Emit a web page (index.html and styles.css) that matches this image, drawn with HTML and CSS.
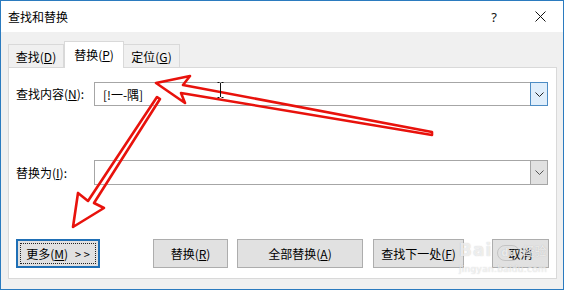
FILE: index.html
```html
<!DOCTYPE html>
<html lang="zh-CN">
<head>
<meta charset="utf-8">
<title>查找和替换</title>
<link rel="stylesheet" href="styles.css">
</head>
<body>
<div class="window">
  <div class="titlebar">
    <div class="title">查找和替换</div>
    <div class="tb-btn help">?</div>
    <div class="tb-btn close">
      <svg width="11" height="11" viewBox="0 0 11 11"><path d="M0.5 0.5 L10.5 10.5 M10.5 0.5 L0.5 10.5" stroke="#111" stroke-width="1" fill="none"/></svg>
    </div>
  </div>
  <div class="body">
    <div class="tabs">
      <div class="tab">查找(<u>D</u>)</div>
      <div class="tab active">替换(<u>P</u>)</div>
      <div class="tab narrow">定位(<u>G</u>)</div>
    </div>
    <div class="panel">
      <div class="row">
        <div class="label">查找内容(<u>N</u>):</div>
        <div class="combo">
          <div class="combo-text">[!一-隅]</div>
          <div class="combo-btn focus"><svg width="9" height="5" viewBox="0 0 9 5"><path d="M0.5 0.5 L4.5 4.5 L8.5 0.5" stroke="#222" stroke-width="1" fill="none"/></svg></div>
        </div>
      </div>
      <div class="row row2">
        <div class="label">替换为(<u>I</u>):</div>
        <div class="combo">
          <div class="combo-text"></div>
          <div class="combo-btn"><svg width="9" height="5" viewBox="0 0 9 5"><path d="M0.5 0.5 L4.5 4.5 L8.5 0.5" stroke="#555" stroke-width="1" fill="none"/></svg></div>
        </div>
      </div>
      <div class="buttons">
        <div class="btn more"><span class="focusrect">更多(<u>M</u>)<span class="gt">&gt; &gt;</span></span></div>
        <div class="btn b-replace">替换(<u>R</u>)</div>
        <div class="btn b-all">全部替换(<u>A</u>)</div>
        <div class="btn b-next">查找下一处(<u>F</u>)</div>
        <div class="btn b-cancel">取消</div>
      </div>
    </div>
  </div>
  <div class="watermark">
    <span class="wm-bai">Bai</span><span class="wm-du">du</span><span class="wm-jy">经验</span>
    <div class="wm-url">jingyan.baidu.com</div>
  </div>
  <svg class="overlay" width="565" height="291" viewBox="0 0 565 291">
    <g stroke="#e8120c" stroke-width="2.6" fill="none" stroke-linejoin="round" stroke-linecap="round">
      <path d="M183 85 L432 132 L432 135 L181 93 L185 103 L156 83 L190 76 Z"/>
      <path d="M157 97 L88 201 L78 193 L73 227 L104 208 L94 203 L160 99 Z"/>
    </g>
    <g stroke="#111" stroke-width="1" fill="none">
      <path d="M220.5 83 L220.5 97 M217.5 82.5 L219.5 82.5 M221.5 82.5 L223.5 82.5 M217.5 97.5 L219.5 97.5 M221.5 97.5 L223.5 97.5"/>
    </g>
  </svg>
</div>
</body>
</html>
```
FILE: styles.css
```css
* { box-sizing: border-box; }
html, body { margin: 0; padding: 0; background: #fff; }
body {
  font-family: "Noto Sans CJK SC", "Microsoft YaHei", sans-serif;
  font-size: 12px;
  color: #000;
  line-height: 14px;
}
u { text-decoration: underline; text-underline-offset: 1px; }

.window {
  position: relative;
  width: 564px;
  height: 290px;
  border: 1px solid #2b7bbf;
  display: flex;
  flex-direction: column;
  background: #f0f0f0;
}

.titlebar {
  height: 31px;
  background: #fff;
  display: flex;
  align-items: center;
  padding-left: 7px;
  flex: none;
}
.title { flex: 1; padding-top: 1px; }
.tb-btn {
  width: 46px;
  height: 31px;
  display: flex;
  align-items: center;
  justify-content: center;
}
.help { font-family: "Segoe UI", "Noto Sans", sans-serif; font-size: 13px; color: #111; }

.body {
  flex: 1;
  display: flex;
  flex-direction: column;
  padding: 8px 6px 10px 7px;
}

.tabs {
  display: flex;
  align-items: flex-end;
  height: 27px;
  flex: none;
  position: relative;
  z-index: 1;
}
.tab {
  width: 56px;
  height: 23px;
  border: 1px solid #d9d9d9;
  border-bottom: none;
  background: #f0f0f0;
  display: flex;
  align-items: center;
  justify-content: center;
  padding-top: 1px;
  color: #000;
}
.tab.active {
  width: 60px;
  height: 27px;
  background: #fff;
  margin-bottom: -1px;
  padding-bottom: 1px;
}
.tab.narrow { border-left: none; }

.panel {
  flex: 1;
  background: #fff;
  border: 1px solid #d9d9d9;
  padding: 14px 8px 0 7px;
  display: flex;
  flex-direction: column;
}

.row {
  display: flex;
  align-items: center;
  height: 24px;
}
.row2 { margin-top: 54px; height: 25px; }
.label { width: 78px; flex: none; }

.combo {
  flex: 1;
  height: 100%;
  border: 1px solid #a6a6a6;
  display: flex;
  align-items: center;
}
.combo-text { flex: 1; padding-left: 8px; padding-top: 1px; }
.combo-btn {
  width: 18px;
  height: calc(100% + 2px);
  margin: -1px -1px -1px 0;
  border: 1px solid #a6a6a6;
  background: #e1e1e1;
  display: flex;
  align-items: center;
  justify-content: center;
}
.combo-btn.focus {
  border-color: #4d8cc4;
  background: #e0eefb;
}

.buttons {
  display: flex;
  margin-top: 54px;
  height: 29px;
}
.btn {
  flex: none;
  height: 29px;
  border: 1px solid #adadad;
  background: #e1e1e1;
  display: flex;
  align-items: center;
  justify-content: center;
  padding-top: 1px;
  white-space: nowrap;
}
.btn.more {
  width: 84px;
  border: 2px solid #1f6fb5;
  padding: 2px;
}
.focusrect {
  flex: 1;
  height: 100%;
  border: 1px dotted #222;
  display: flex;
  align-items: center;
  justify-content: center;
  padding-top: 1px;
}
.gt { margin-left: 7px; font-size: 11px; }
.b-replace { width: 75px; margin-left: 53px; }
.b-all { width: 126px; margin-left: 9px; }
.b-next { width: 91px; margin-left: 10px; }
.b-cancel { width: 57px; margin-left: 28px; }

.watermark {
  position: absolute;
  left: 458px;
  top: 242px;
  width: 105px;
  color: rgba(255, 255, 255, 0.7);
  text-shadow: 0 0 1px rgba(140, 140, 140, 0.5);
  font-family: "DejaVu Sans", sans-serif;
  pointer-events: none;
}
.wm-bai { font-size: 17px; font-weight: bold; letter-spacing: 1px; }
.wm-du {
  display: inline-block;
  font-size: 10px;
  font-weight: bold;
  border: 1px solid rgba(160, 160, 160, 0.45);
  border-radius: 9px;
  padding: 0 3px;
  margin-left: 5px;
}
.wm-jy { font-family: "Noto Sans CJK SC", sans-serif; font-size: 12px; margin-left: 3px; }
.wm-url { font-size: 9px; line-height: 11px; margin-top: 3px; letter-spacing: 0.3px; }

.overlay {
  position: absolute;
  left: -1px;
  top: -1px;
  pointer-events: none;
}
```
